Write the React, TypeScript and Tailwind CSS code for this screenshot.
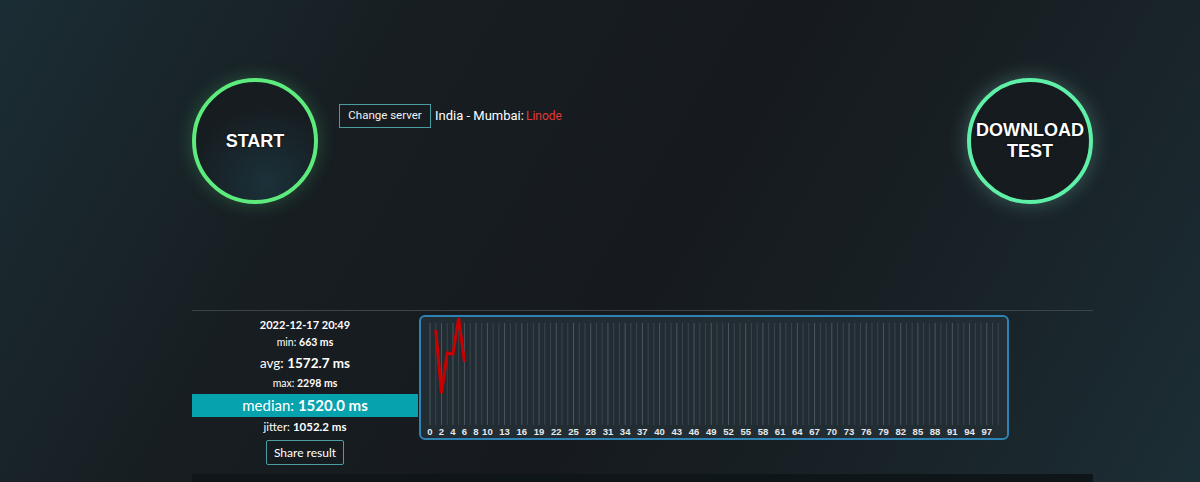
import React from "react";

const STEP = 5.74;
const X0 = 9;
const labels = [0, 2, 4, 6, 8];
for (let v = 10; v <= 97; v += 3) labels.push(v);

const data: [number, number][] = [
  [1, 13],
  [2, 76],
  [3, 36],
  [4, 37],
  [5, 1],
  [6, 45],
];

function Chart() {
  const xs = Array.from({ length: 100 }, (_, i) => X0 + i * STEP);
  return (
    <svg width={586} height={121} className="block">
      {xs.map((x, i) => (
        <line
          key={i}
          x1={x}
          x2={x}
          y1={6}
          y2={108}
          stroke={labels.includes(i) ? "#4b565e" : "#3a454d"}
          strokeWidth={1}
        />
      ))}
      {labels.map((v) => (
        <text
          key={v}
          x={X0 + v * STEP}
          y={115}
          fill="#e6e9eb"
          fontSize={9.5}
          fontWeight={700}
          fontFamily="'Liberation Sans', Arial, sans-serif"
          textAnchor="middle"
          dominantBaseline="middle"
        >
          {v}
        </text>
      ))}
      <polyline
        points={data.map(([i, y]) => `${X0 + i * STEP},${y}`).join(" ")}
        fill="none"
        stroke="#c80000"
        strokeWidth={3}
        strokeLinejoin="miter"
      />
    </svg>
  );
}

export default function App() {
  return (
    <div className="h-[482px] w-full overflow-hidden bg-[linear-gradient(120deg,#1b2d34_0%,#171d21_30%,#161a1e_55%,#182126_75%,#1c2e35_100%)]">
      <div className="ml-[192px] w-[901px]">
        {/* top row */}
        <div className="flex items-start pt-[78px]">
          <div className="flex h-[126px] w-[126px] items-center justify-center rounded-full border-[4px] border-[#5ceb7c] bg-[radial-gradient(circle_at_60%_85%,#1b3139_0%,#161c20_65%)] shadow-[0_0_18px_rgba(92,235,124,0.25)]">
            <span className="font-['Liberation_Sans',Arial,sans-serif] text-[18px] font-bold text-white [text-shadow:0_0_2px_#000]">
              START
            </span>
          </div>
          <div className="ml-[21px] mt-[26px] flex items-center">
            <button className="flex h-[24px] w-[92px] items-center justify-center border border-[#4b9ea0] bg-[#161c20] font-['Roboto',Arial,sans-serif] text-[11.5px] text-[#f2f2f2]">
              Change server
            </button>
            <span className="ml-[4px] font-['Roboto',Arial,sans-serif] text-[13px] text-white">
              India - Mumbai:
            </span>
            <span className="ml-[2px] font-['Roboto',Arial,sans-serif] text-[12px] text-[#e23a3a]">
              Linode
            </span>
          </div>
          <div className="ml-auto flex h-[126px] w-[126px] items-center justify-center rounded-full border-[4px] border-[#5ef0a6] bg-[#161b1f] shadow-[0_0_20px_rgba(150,235,215,0.3)]">
            <span className="text-center font-['Liberation_Sans',Arial,sans-serif] text-[18px] font-bold leading-[21px] text-white [text-shadow:0_0_2px_#000]">
              DOWNLOAD
              <br />
              TEST
            </span>
          </div>
        </div>

        {/* results */}
        <div className="mt-[106px] flex border-t border-[#3b4549] font-['Lato','Open_Sans',sans-serif] text-white">
          <div className="flex w-[226px] flex-col items-center pt-[4px]">
            <div className="flex h-[20px] items-center text-[11px] font-bold">2022-12-17 20:49</div>
            <div className="flex h-[16px] items-center text-[10.5px]">
              min:&nbsp;<b>663 ms</b>
            </div>
            <div className="flex h-[24px] items-center text-[13.5px]">
              avg:&nbsp;<b>1572.7 ms</b>
            </div>
            <div className="flex h-[18px] items-center text-[10.5px]">
              max:&nbsp;<b>2298 ms</b>
            </div>
            <div className="mt-[1px] flex h-[23px] w-full items-center justify-center bg-[#06a2ad] text-[15px]">
              median:&nbsp;<b>1520.0 ms</b>
            </div>
            <div className="flex h-[20px] items-center text-[11.5px]">
              jitter:&nbsp;<b>1052.2 ms</b>
            </div>
            <button className="mt-[3px] flex h-[25px] w-[78px] items-center justify-center rounded-[2px] border border-[#4b9ea0] bg-[#151b1f] text-[12px] text-white">
              Share result
            </button>
          </div>
          <div className="ml-[1px] mt-[4px] h-[125px] w-[590px] rounded-[6px] border-2 border-[#2d84b4] bg-[#222c33]">
            <Chart />
          </div>
        </div>

        <div className="mt-[9px] h-[10px] w-[901px] bg-[#0f161a]" />
      </div>
    </div>
  );
}
